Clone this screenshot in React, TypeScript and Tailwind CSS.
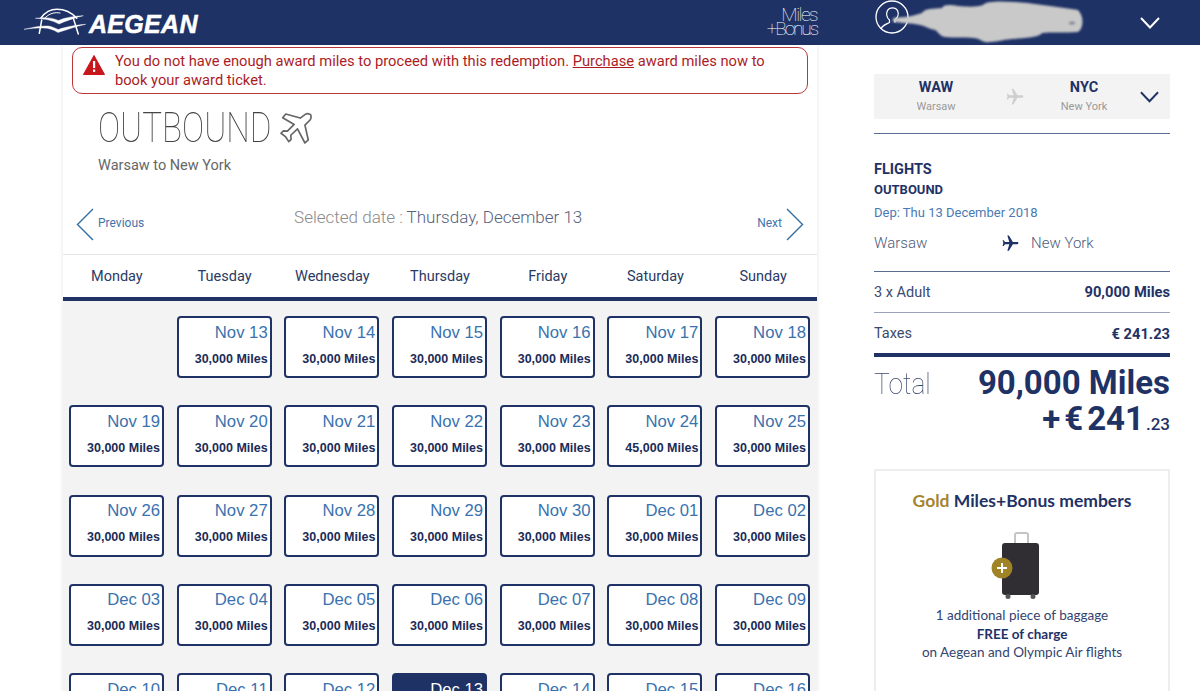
import { MdFlight } from "react-icons/md";

const days = ["Monday", "Tuesday", "Wednesday", "Thursday", "Friday", "Saturday", "Sunday"];

const cells: { date: string; miles?: string; selected?: boolean }[] = [
  { date: "" },
  ...["Nov 13", "Nov 14", "Nov 15", "Nov 16", "Nov 17", "Nov 18", "Nov 19", "Nov 20", "Nov 21", "Nov 22", "Nov 23"].map(date => ({ date })),
  { date: "Nov 24", miles: "45,000 Miles" },
  ...["Nov 25", "Nov 26", "Nov 27", "Nov 28", "Nov 29", "Nov 30", "Dec 01", "Dec 02", "Dec 03", "Dec 04", "Dec 05", "Dec 06", "Dec 07", "Dec 08", "Dec 09", "Dec 10", "Dec 11", "Dec 12"].map(date => ({ date })),
  { date: "Dec 13", selected: true },
  ...["Dec 14", "Dec 15", "Dec 16"].map(date => ({ date })),
];

function AegeanLogo() {
  return (
    <svg width="64" height="30" viewBox="0 0 64 30" fill="none" stroke="white" strokeLinecap="round">
      <path d="M17 10 C22 3 28 1.3 33 1.3 C41 1.3 48 5 52.7 10.3" strokeWidth="1.5" />
      <path d="M20 11 C25 5 31 4 36 5" strokeWidth="1" />
      <path d="M11.7 10.3 C20 9 28 9.5 34.3 12.5 C41 9.5 50 8 59.3 7.7 C50 10 42 13 35 16 C29 12.5 20 10.5 11.7 10.3Z" fill="white" strokeWidth="0.4" />
      <path d="M0.3 21.3 C8 19.5 17 17.5 24.3 18 C28 18.5 31 20.5 34.3 21.5 C41 19 52 17 61.7 16.3 C52 18.5 42 22 34 24.5 C29 21.5 25 20 19 20 C12 20 6 20.5 0.3 21.3Z" fill="white" strokeWidth="0.4" />
      <path d="M17.7 12 L15.3 25.3" strokeWidth="1.5" />
      <path d="M49.3 10.3 L54.3 26" strokeWidth="1.5" />
    </svg>
  );
}

function UserBadge() {
  return (
    <svg width="34" height="34" viewBox="0 0 34 34" fill="none" stroke="white" strokeWidth="1.3">
      <circle cx="17" cy="17" r="16" />
      <path d="M6 29 C7 25 12 24 14.5 22.5 L14.5 20 C11.5 17.5 11 13.5 12.5 10.5 C14.5 7 20.5 7 22.5 10.5 C24 13.5 23 17.5 20 20 L20 22.5" />
    </svg>
  );
}

function Chevron({ className, width, height, sw }: { className: string; width: number; height: number; sw: number }) {
  return (
    <svg width={width} height={height} viewBox="0 0 20 12" fill="none" stroke="currentColor" strokeWidth={sw} className={className}>
      <path d="M1 1 L10 10.5 L19 1" />
    </svg>
  );
}

function DayCell({ date, miles, selected }: { date: string; miles?: string; selected?: boolean }) {
  if (!date) return <div className="h-[62px]" />;
  return (
    <div
      className={`h-[62px] rounded-[4px] border-2 border-[#1f3266] pr-[2px] text-right font-['Liberation_Sans',sans-serif] ${
        selected ? "bg-[#1f3266] text-white" : "bg-white"
      }`}
    >
      <div className={`pt-[4.5px] text-[16.7px] leading-[20px] ${selected ? "text-white" : "text-[#3a72ae]"}`}>{date}</div>
      <div className="mt-[9px] text-[12.5px] font-bold leading-[14px] text-[#1c2b57]">{miles ?? "30,000 Miles"}</div>
    </div>
  );
}

export default function App() {
  return (
    <div className="h-[691px] w-[1200px] overflow-hidden bg-white font-['Roboto',sans-serif]">
      <header className="flex h-[45px] items-center bg-[#1f3266] text-white">
        <div className="ml-[24px] flex w-[730px] items-center">
          <AegeanLogo />
          <span className="ml-[1px] mt-[3px] font-['Liberation_Sans',sans-serif] text-[25px] font-bold italic leading-none tracking-[0.3px] [-webkit-text-stroke:0.5px_white]">
            AEGEAN
          </span>
        </div>
        <div className="ml-[12px] mt-[-2px] w-[51px] whitespace-nowrap text-right text-[19px] font-thin leading-[14px]">
          <div className="tracking-[-1.5px]">Miles</div>
          <div className="tracking-[-2.1px]">+Bonus</div>
        </div>
        <div className="relative ml-[58px] h-[45px] w-[207px]">
          <div className="absolute left-0 top-0">
            <UserBadge />
          </div>
          <svg width="205" height="44" viewBox="0 0 205 44" className="absolute left-[6px] top-0 blur-[1.2px]">
            <path
              d="M12 18 C18 17 27 18 41 13 C44 8 52 9 61 8 C63 4 70 5 77 6 C88 7 96 7 102 5 C104 1 120 1 134 2 C150 3 170 6 197 10 C203 16 203 28 197 32 C185 33 170 32 161 33 C159 37 145 38 131 39 C120 40 110 43 104 42 C100 41 98 38 92 38 C84 37 72 38 64 37 C58 36 57 31 54 30 C48 29 44 26 39 25 C30 23 20 23 12 22Z"
              fill="#c9c9c9"
            />
            <ellipse cx="191" cy="23" rx="3" ry="1.5" fill="#7f8696" />
          </svg>
        </div>
        <Chevron className="ml-[58px] mt-[1px] text-white" width={20} height={12} sw={2} />
      </header>

      <div className="flex h-[646px]">
        <main className="ml-[63px] flex w-[754px] flex-col overflow-hidden shadow-[0_0_4px_rgba(0,0,0,0.12)]">
          <div className="mx-[9px] mt-[2px] flex h-[47px] shrink-0 rounded-[10px] border border-[#b9373a] bg-white">
            <svg width="22" height="20" viewBox="0 0 22 20" className="ml-[10px] mt-[7px] shrink-0">
              <path d="M11 0.5 L21.5 19.5 L0.5 19.5Z" fill="#c8161d" stroke="#c8161d" strokeLinejoin="round" />
              <rect x="10" y="6" width="2.2" height="7" fill="white" />
              <rect x="10" y="14.5" width="2.2" height="2.4" fill="white" />
            </svg>
            <p className="ml-[10px] mt-[4px] text-[14.7px] leading-[19px] text-[#ac1c1f]">
              You do not have enough award miles to proceed with this redemption. <span className="underline">Purchase</span> award miles now to
              <br />
              book your award ticket.
            </p>
          </div>

          <div className="ml-[35px] mt-[12px] flex h-[44px] shrink-0 items-center">
            <div className="w-[172px]">
              <span className="inline-block origin-left scale-x-[0.79] text-[42px] font-thin leading-[44px] text-[#444]">OUTBOUND</span>
            </div>
            <svg width="32" height="32" viewBox="30 35 95 95" fill="none" stroke="#666" strokeWidth="5" strokeLinejoin="round" className="ml-[10px]">
              <path d="M119 42 Q125 45 120 58 L104 74 L114 118 L104 127 L82 85 L62 104 L63 116 L56 123 L46 108 L33 98 L40 91 L52 92 L72 72 L38 52 L47 41 L90 53 L105 42 Q112 38 119 42Z" />
            </svg>
          </div>
          <div className="ml-[35px] mt-[6px] shrink-0 text-[14.5px] leading-[20px] text-[#666]">Warsaw to New York</div>

          <div className="mt-[24px] flex h-[55px] shrink-0 items-start border-b border-[#e6e6e6] px-[13px]">
            <svg width="18" height="33" viewBox="0 0 18 33" fill="none" stroke="#2f6ea5" strokeWidth="1.4" className="mt-[8px]">
              <path d="M17 1 L1.5 16.5 L17 32" />
            </svg>
            <span className="ml-[4px] mt-[15px] text-[12px] leading-[16px] text-[#3f74ab]">Previous</span>
            <div className="flex-1 pr-[25px] pt-[5px] text-center text-[17px] font-light leading-[24px] text-[#8a8a8a]">
              Selected date : <span className="text-[#56627e]">Thursday, December 13</span>
            </div>
            <span className="mr-[4px] mt-[15px] text-[12px] leading-[16px] text-[#3f74ab]">Next</span>
            <svg width="18" height="33" viewBox="0 0 18 33" fill="none" stroke="#2f6ea5" strokeWidth="1.4" className="mt-[8px]">
              <path d="M1 1 L16.5 16.5 L1 32" />
            </svg>
          </div>

          <div className="grid h-[46px] shrink-0 grid-cols-7 border-b-[4px] border-[#1f3266] text-center text-[14.5px] leading-[44px] text-[#2a3a63]">
            {days.map(d => (
              <div key={d}>{d}</div>
            ))}
          </div>

          <div className="grid shrink-0 grid-cols-7 gap-x-[12.67px] gap-y-[27.33px] bg-[#f3f3f3] pb-[20px] pl-[6px] pr-[7px] pt-[15px]">
            {cells.map((c, i) => (
              <DayCell key={i} date={c.date} miles={c.miles} selected={c.selected} />
            ))}
          </div>
        </main>

        <aside className="ml-[57px] w-[296px]">
          <div className="mt-[29px] flex h-[45px] items-center bg-[#f3f3f3] text-center">
            <div className="w-[124px]">
              <div className="text-[14.5px] font-bold leading-[16px] text-[#1f3266]">WAW</div>
              <div className="mt-[3px] text-[11px] leading-[15px] text-[#999]">Warsaw</div>
            </div>
            <MdFlight size={20} className="ml-[7px] rotate-90 text-[#cfcfcf]" />
            <div className="ml-[4px] w-[110px]">
              <div className="text-[14.5px] font-bold leading-[16px] text-[#1f3266]">NYC</div>
              <div className="mt-[3px] text-[11px] leading-[15px] text-[#999]">New York</div>
            </div>
            <Chevron className="ml-[1px] text-[#1f3266]" width={19} height={12} sw={2} />
          </div>
          <div className="mt-[14px] h-px bg-[#5b6c92]" />

          <div className="mt-[27px] text-[14.5px] font-bold leading-[18px] text-[#1f3266]">FLIGHTS</div>
          <div className="mt-[3px] text-[13px] font-bold leading-[16px] text-[#1f3266]">OUTBOUND</div>
          <div className="mt-[6px] text-[13px] leading-[17px] text-[#4a7ab5]">Dep: Thu 13 December 2018</div>
          <div className="mt-[12px] flex h-[20px] items-center text-[15px] font-light text-[#4d5a78]">
            <span className="w-[127px]">Warsaw</span>
            <MdFlight size={19} className="rotate-90 text-[#1f3266]" />
            <span className="ml-[11px]">New York</span>
          </div>

          <div className="mt-[18px] h-px bg-[#5b6c92]" />
          <div className="flex h-[40px] items-center justify-between pt-[1px] text-[14.5px] text-[#3b4a6e]">
            <span>3 x Adult</span>
            <span className="text-[14.7px] font-bold text-[#1f3266]">90,000 Miles</span>
          </div>
          <div className="h-px bg-[#99a3bb]" />
          <div className="flex h-[40px] items-center justify-between pt-[2px] text-[14.5px] text-[#3b4a6e]">
            <span>Taxes</span>
            <span className="text-[14.7px] font-bold text-[#1f3266]">€ 241.23</span>
          </div>
          <div className="h-[4px] bg-[#1f3266]" />
          <div className="mt-[6px] flex items-start justify-between">
            <span className="mt-[2px] inline-block origin-left scale-x-[0.88] text-[30px] font-thin leading-[38px] text-[#3b4a6e]">Total</span>
            <span className="text-[33px] font-bold leading-[40px] text-[#1f3266]">90,000 Miles</span>
          </div>
          <div className="mt-[-3px] flex h-[37px] items-baseline justify-end text-[33px] font-bold leading-[38px] text-[#1f3266]">
            <span className="mr-[4px]">+</span>
            <span className="mr-[4px]">€</span>
            <span>241</span>
            <span className="ml-[2px] text-[17px] font-medium leading-none">.23</span>
          </div>

          <div className="mt-[32px] h-[260px] border-2 border-[#eeeeee] text-center font-['Lato',sans-serif] text-[#33436f]">
            <div className="mt-[19px] text-[17.5px] font-bold leading-[22px] text-[#1f3266]">
              <span className="text-[#a5842f]">Gold</span> Miles+Bonus members
            </div>
            <div className="mt-[20px] flex justify-center">
              <svg width="70" height="68" viewBox="0 0 70 68">
                <path d="M28 11 V3 Q28 1 30 1 H39 Q41 1 41 3 V11" fill="none" stroke="#c4c4c4" strokeWidth="2" />
                <rect x="15" y="11" width="37" height="52" rx="3" fill="#302e33" />
                <circle cx="21" cy="64.5" r="2.5" fill="#555" />
                <circle cx="46" cy="64.5" r="2.5" fill="#555" />
                <circle cx="15" cy="36" r="10.5" fill="#a08227" />
                <path d="M15 31 V41 M10 36 H20" stroke="white" strokeWidth="2" />
              </svg>
            </div>
            <div className="mt-[6px] text-[13.5px] leading-[18.5px]">
              1 additional piece of baggage
              <br />
              <span className="font-bold text-[#1f3266]">FREE of charge</span>
              <br />
              on Aegean and Olympic Air flights
            </div>
          </div>
        </aside>
      </div>
    </div>
  );
}
